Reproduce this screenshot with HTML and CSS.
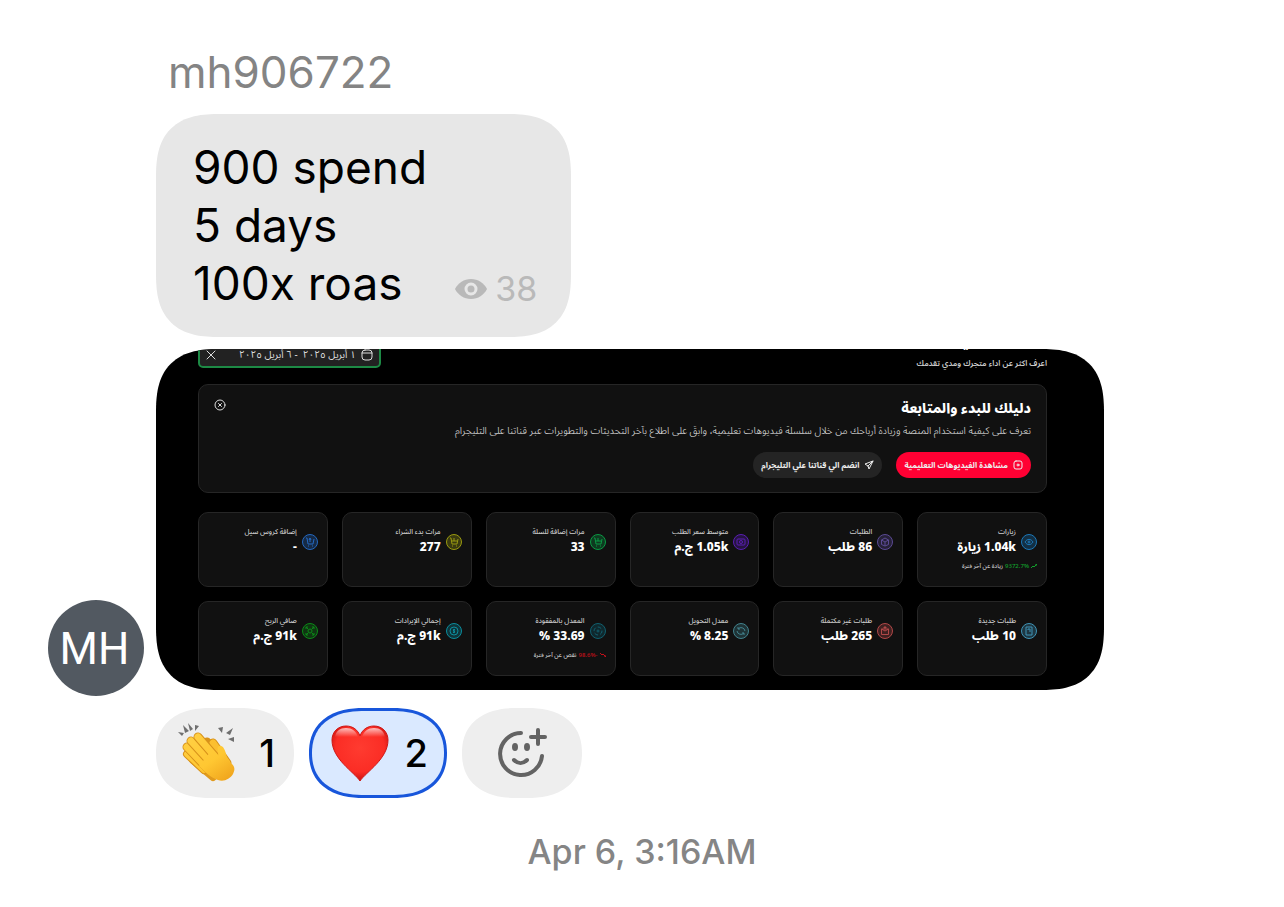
FILE: index.html
```
<!DOCTYPE html>
<html lang="en">

	<head>
		<meta charset="utf-8" />
		<title>mh906722</title>
		<link rel="stylesheet" href="styles.css">
	</head>

	<body>
		<main class="chat">
			<div class="name">mh906722</div>
			<div class="bubble">
				<p class="text">900 spend<br>5 days<br>100x roas</p>
				<div class="views">
					<svg width="32" height="22" viewBox="0 0 32 22"><path d="M16 1C9 1 3 5 0 11c3 6 9 10 16 10s13-4 16-10C29 5 23 1 16 1z" fill="#b9b9b9"/><circle cx="16" cy="11" r="5" fill="none" stroke="#e7e7e7" stroke-width="3"/></svg>
					<span>38</span>
				</div>
			</div>

			<div class="row">
				<div class="avatar">MH</div>
				<section class="media" dir="rtl" lang="ar">
					<header class="top">
						<div class="heading">
							<h1>نظرة عامة علي</h1>
							<p>اعرف اكثر عن اداء متجرك ومدي تقدمك</p>
						</div>
						<div class="date">
							<svg width="12" height="12" viewBox="0 0 12 12" class="line"><rect x="1" y="1" width="10" height="10" rx="3"/><path d="M1 4h10"/></svg>
							<span>١ أبريل ٢٠٢٥ &nbsp;- ٦ أبريل ٢٠٢٥</span>
							<button class="clear" aria-label="مسح"><svg width="10" height="10" viewBox="0 0 10 10" class="line"><path d="M1 1l8 8M9 1l-8 8"/></svg></button>
						</div>
					</header>

					<div class="guide">
						<div class="guide_text">
							<h2>دليلك للبدء والمتابعة</h2>
							<p>تعرف على كيفية استخدام المنصة وزيادة أرباحك من خلال سلسلة فيديوهات تعليمية، وابقَ على اطلاع بآخر التحديثات والتطويرات عبر قناتنا على التليجرام</p>
							<div class="actions">
								<button class="btn red"><svg width="10" height="10" viewBox="0 0 10 10" class="line"><rect x="1" y="1" width="8" height="8" rx="2"/><circle cx="5" cy="5" r="1"/></svg>مشاهدة الفيديوهات التعليمية</button>
								<button class="btn"><svg width="10" height="10" viewBox="0 0 10 10" class="line"><path d="M9 1L1 4l3 2 1 3 4-8L4 6"/></svg>انضم الي قناتنا علي التليجرام</button>
							</div>
						</div>
						<button class="close" aria-label="إغلاق"><svg width="12" height="12" viewBox="0 0 12 12" class="line"><circle cx="6" cy="6" r="5"/><path d="M4.500 4.500l3 3M7.500 4.500l-3 3"/></svg></button>
					</div>

					<div class="cards">
						<div class="card">
							<svg class="icon blue" viewBox="0 0 16 16"><circle cx="8" cy="8" r="7.500"/><path d="M4 8c2-3.500 6-3.500 8 0-2 3.500-6 3.500-8 0z"/><circle cx="8" cy="8" r="1"/></svg>
							<div><h3>زيارات</h3><strong>1.04k زيارة</strong></div>
							<p class="trend"><svg width="6" height="4" viewBox="0 0 6 4"><path d="M0 4l2-2 1 1 3-3M4 0h2v2" fill="none" stroke="#12a02c"/></svg><span class="up">9372.7%</span> زيادة عن آخر فترة</p>
						</div>
						<div class="card">
							<svg class="icon violet" viewBox="0 0 16 16"><circle cx="8" cy="8" r="7.500"/><path d="M4.500 6L8 4l3.500 2v4.500L8 12l-3.500-1.500zM4.500 6L8 8l3.500-2M8 8v4"/></svg>
							<div><h3>الطلبات</h3><strong>86 طلب</strong></div>
						</div>
						<div class="card">
							<svg class="icon purple" viewBox="0 0 16 16"><circle cx="8" cy="8" r="7.500"/><rect x="4" y="5" width="8" height="6" rx="1"/><circle cx="8" cy="8" r="1.500"/></svg>
							<div><h3>متوسط سعر الطلب</h3><strong>1.05k ج.م</strong></div>
						</div>
						<div class="card">
							<svg class="icon green" viewBox="0 0 16 16"><circle cx="8" cy="8" r="7.500"/><path d="M4 4h1l1 6h5l1-5M6 7h5M8 4v3M6 12h1M10 12h1"/></svg>
							<div><h3>مرات إضافة للسلة</h3><strong>33</strong></div>
						</div>
						<div class="card">
							<svg class="icon yellow" viewBox="0 0 16 16"><circle cx="8" cy="8" r="7.500"/><path d="M4 4h1l1 6h5l1-5M6 7h5M8 4v3M6 12h1M10 12h1"/></svg>
							<div><h3>مرات بدء الشراء</h3><strong>277</strong></div>
						</div>
						<div class="card">
							<svg class="icon azure" viewBox="0 0 16 16"><circle cx="8" cy="8" r="7.500"/><path d="M4 4h1l1 6h5l1-5M7 6l1-2 1 2M8 4v4M6 12h1M10 12h1"/></svg>
							<div><h3>إضافة كروس سيل</h3><strong>-</strong></div>
						</div>
						<div class="card">
							<svg class="icon sky" viewBox="0 0 16 16"><circle cx="8" cy="8" r="7.500"/><path d="M5 4h6v8H5zM7 6h2v3M7 6v1"/></svg>
							<div><h3>طلبات جديدة</h3><strong>10 طلب</strong></div>
						</div>
						<div class="card">
							<svg class="icon coral" viewBox="0 0 16 16"><circle cx="8" cy="8" r="7.500"/><path d="M4.500 6h7v5.500h-7zM4.500 6L8 8l3.500-2M8 3v3M6.500 4.500h3"/></svg>
							<div><h3>طلبات غير مكتملة</h3><strong>265 طلب</strong></div>
						</div>
						<div class="card">
							<svg class="icon mist" viewBox="0 0 16 16"><circle cx="8" cy="8" r="7.500"/><path d="M5 6a4 4 0 0 1 7 2M11 10a4 4 0 0 1-7-2M5 4v2h2M11 12v-2H9"/></svg>
							<div><h3>معدل التحويل</h3><strong>8.25 %</strong></div>
						</div>
						<div class="card">
							<svg class="icon teal" viewBox="0 0 16 16"><circle cx="8" cy="8" r="7.500"/><circle cx="8" cy="8" r="4" stroke-dasharray="4 2"/><circle cx="8" cy="8" r="1"/></svg>
							<div><h3>المعدل بالمفقودة</h3><strong>33.69 %</strong></div>
							<p class="trend"><svg width="6" height="4" viewBox="0 0 6 4"><path d="M0 0l2 2 1-1 3 3M4 4h2V2" fill="none" stroke="#c4101a"/></svg><span class="down" dir="ltr">98.6%-</span> نقص عن آخر فترة</p>
						</div>
						<div class="card">
							<svg class="icon cyan" viewBox="0 0 16 16"><circle cx="8" cy="8" r="7.500"/><circle cx="8" cy="8" r="4"/><path d="M9 6.500H7.500v1.500h1v1.500H7M8 6v4"/></svg>
							<div><h3>إجمالي الإيرادات</h3><strong>91k ج.م</strong></div>
						</div>
						<div class="card">
							<svg class="icon lime" viewBox="0 0 16 16"><circle cx="8" cy="8" r="7.500"/><path d="M4 4l2 2M12 4l-2 2M4 12l2-2M12 12l-2-2M4 6V4h2M10 4h2v2M4 10v2h2M10 12h2v-2"/><circle cx="8" cy="8" r="2"/></svg>
							<div><h3>صافي الربح</h3><strong>91k ج.م</strong></div>
						</div>
					</div>
				</section>
			</div>

			<div class="reactions">
				<button class="reaction" aria-label="clap 1">
					<svg width="60" height="62" viewBox="0 0 60 62">
						<defs><linearGradient id="skin" gradientUnits="userSpaceOnUse" x1="12" y1="10" x2="48" y2="60"><stop offset="0" stop-color="#ffd045"/><stop offset="0.600" stop-color="#ffc732"/><stop offset="1" stop-color="#f0a51d"/></linearGradient></defs>
						<path d="M6 3l6 6-4 2zM11 1l5 6-3 2zM1 10l6 1-2 3zM18 3l4 1-4 5zM41 6l5-1-1 6zM56 6l-3 7-4-2zM51 17l6-2v5z" fill="#6f6f6f"/>
						<g stroke-linecap="round" stroke-linejoin="round" fill="none">
							<path d="M30 20l16 20M36 21l14 20" stroke="#d8921a" stroke-width="9"/>
							<path d="M36 21l14 20" stroke="#fbbf30" stroke-width="7"/>
							<path d="M16 38l20 17" stroke="#e09a1d" stroke-width="8"/>
							<path d="M10 32l17 16" stroke="#d8921a" stroke-width="8"/><path d="M10 32l17 16" stroke="url(#skin)" stroke-width="6"/>
							<path d="M10 25l20 21" stroke="#d8921a" stroke-width="9"/><path d="M10 25l20 21" stroke="url(#skin)" stroke-width="7"/>
							<path d="M14 19l22 24" stroke="#d8921a" stroke-width="9"/><path d="M14 19l22 24" stroke="url(#skin)" stroke-width="7"/>
							<path d="M21 15l20 23" stroke="#d8921a" stroke-width="9"/><path d="M21 15l20 23" stroke="url(#skin)" stroke-width="7"/>
						</g>
						<path d="M34 29l7 6c1-4-2-9 1-11 4-1 6 4 7 8 1 5 3 8 6 10 3 3 3 6 1 10-3 5-9 8-15 6-7-2-13-8-19-14z" fill="url(#skin)"/>
					</svg>
					<span>1</span>
				</button>
				<button class="reaction mine" aria-label="heart 2">
					<svg width="58" height="58" viewBox="0 0 58 58">
						<defs>
							<radialGradient id="heart" cx="0.500" cy="0.400" r="0.620"><stop offset="0" stop-color="#ff3b30"/><stop offset="0.700" stop-color="#fb2d25"/><stop offset="1" stop-color="#c30d0c"/></radialGradient>
							<linearGradient id="shine" x1="0" y1="0" x2="0" y2="1"><stop offset="0" stop-color="#fff" stop-opacity="0.700"/><stop offset="1" stop-color="#fff" stop-opacity="0"/></linearGradient>
						</defs>
						<path d="M29 57C23 48 1 35 1 16 1 8 7 2 15 2c7 0 12 4 14 10C31 6 36 2 43 2c8 0 14 6 14 14 0 19-22 32-28 41z" fill="url(#heart)" stroke="#cf1714"/>
						<path d="M4 13c1-6 5-9 11-9s10 3 12 9zM31 13c2-6 6-9 12-9s10 3 11 9z" fill="url(#shine)"/>
					</svg>
					<span>2</span>
				</button>
				<button class="reaction add" aria-label="Add reaction">
					<svg width="50" height="50" viewBox="0 0 50 50" fill="none" stroke="#636363" stroke-width="4" stroke-linecap="round"><path d="M24 5a21 21 0 1 0 21 23M41 2v14M34 9h14M17 32c4 4 9 4 13 0"/><ellipse cx="18" cy="19" rx="3" ry="4" fill="#636363" stroke="none"/><ellipse cx="30" cy="19" rx="3" ry="4" fill="#636363" stroke="none"/></svg>
				</button>
			</div>

			<time class="time">Apr 6, 3:16AM</time>
		</main>
	</body>

</html>
```
FILE: styles.css
```
* {
	margin: 0;
	padding: 0;
	box-sizing: border-box;
}

body {
	background: #fff;
	color: #000;
	font-family: Inter, "Liberation Sans", sans-serif;
}

button {
	border: none;
	background: none;
	color: inherit;
	font-family: inherit;
	cursor: pointer;
}

svg {
	flex: none;
	display: block;
}

.chat {
	display: flex;
	flex-direction: column;
	align-items: flex-start;
	padding: 43px 180px 32px 48px;
}

.name {
	margin: 0 0 13px 120px;
	font-size: 44px;
	line-height: 58px;
	color: #848484;
}

.bubble {
	display: flex;
	align-items: flex-end;
	gap: 28px;
	margin-left: 108px;
	padding: 24px 34px 25px 37px;
	border-radius: 56px;
	background: #e7e7e7;
}

.text {
	font-size: 46px;
	line-height: 58px;
}

.views {
	display: flex;
	align-items: center;
	gap: 8px;
	font-size: 34px;
	line-height: 46px;
	color: #b9b9b9;
}

.row {
	display: flex;
	align-items: flex-end;
	align-self: stretch;
	gap: 12px;
	margin-top: 12px;
}

.avatar {
	flex: none;
	width: 96px;
	height: 96px;
	margin-bottom: -6px;
	padding-right: 3px;
	border-radius: 50%;
	background: #525961;
	color: #fff;
	font-family: Roboto, sans-serif;
	font-size: 44px;
	line-height: 98px;
	text-align: center;
}

/* shared dashboard */
.media {
	flex: 1;
	min-width: 0;
	padding: 0 57px 14px 42px;
	overflow: hidden;
	border-radius: 56px;
	background: #000;
	color: #fff;
	font-family: "Noto Sans Arabic", "Noto Sans", "DejaVu Sans", sans-serif;
}

.line {
	fill: none;
	stroke: currentColor;
	stroke-linecap: round;
	stroke-linejoin: round;
}

.top {
	display: flex;
	justify-content: space-between;
	align-items: flex-start;
	height: 35px;
}

.heading {
	margin-top: -20px;
}

.heading h1 {
	margin-bottom: 5px;
	font-size: 14px;
	line-height: 22px;
}

.heading p {
	font-size: 8px;
	font-weight: 600;
	line-height: 16px;
	color: #ccc;
}

.date {
	display: flex;
	align-items: center;
	gap: 5px;
	height: 27px;
	margin-top: -8px;
	padding: 0 6px;
	border: 2px solid #1d8a45;
	border-radius: 5px;
	background: #222;
	color: #ddd;
	font-size: 10px;
	white-space: nowrap;
}

.date span {
	margin-left: 18px;
}

.guide {
	display: flex;
	justify-content: space-between;
	align-items: flex-start;
	padding: 14px 15px;
	border: 1px solid #262626;
	border-radius: 10px;
	background: #111;
}

.guide h2 {
	font-size: 14px;
	font-weight: 800;
	line-height: 20px;
}

.guide p {
	font-size: 10px;
	font-weight: 300;
	line-height: 24px;
	color: #eee;
}

.close {
	color: #ddd;
}

.actions {
	display: flex;
	gap: 14px;
	margin-top: 9px;
}

.btn {
	display: flex;
	align-items: center;
	gap: 5px;
	height: 26px;
	padding: 0 8px;
	border-radius: 13px;
	background: #242424;
	color: #eee;
	font-size: 8px;
	font-weight: bold;
}

.red {
	background: #ff0033;
}

.cards {
	display: grid;
	grid-template-columns: repeat(6, 1fr);
	gap: 14px;
	margin-top: 19px;
}

.card {
	display: grid;
	grid-template-columns: 16px 1fr;
	align-content: start;
	column-gap: 5px;
	height: 75px;
	padding: 13px 9px;
	border: 1px solid #262626;
	border-radius: 10px;
	background: #111;
}

.card h3 {
	font-size: 7px;
	font-weight: 500;
	line-height: 12px;
	color: #ccc;
}

.card strong {
	display: block;
	font-size: 12px;
	font-weight: 800;
	line-height: 20px;
}

.trend {
	display: flex;
	align-items: center;
	gap: 2px;
	grid-column: 1 / 3;
	margin-top: 2px;
	font-size: 6px;
	font-weight: 500;
	line-height: 12px;
	color: #ccc;
}

.up {
	color: #12a02c;
}

.down {
	color: #c4101a;
}

.icon {
	width: 16px;
	height: 16px;
	margin-top: 8px;
	fill: none;
	stroke: currentColor;
}

.icon circle:first-child {
	fill: currentColor;
	fill-opacity: 0.3;
}

.blue { color: #1c78b8; }
.violet { color: #5b4a94; }
.purple { color: #5a1eb4; }
.green { color: #0b9a44; }
.yellow { color: #9a9a10; }
.azure { color: #2468c0; }
.sky { color: #3f93b5; }
.coral { color: #b04848; }
.mist { color: #42838e; }
.teal { color: #11606f; }
.cyan { color: #0c8c9c; }
.lime { color: #0c8a18; }

.reactions {
	display: flex;
	gap: 15px;
	margin: 18px 0 0 108px;
}

.reaction {
	display: flex;
	align-items: center;
	justify-content: space-between;
	width: 138px;
	height: 90px;
	padding: 0 19px 0 21px;
	border-radius: 45px;
	background: #eee;
	color: #000;
	font-size: 38px;
	font-weight: 500;
}

.mine {
	border: 3px solid #1856db;
	background: #dae9ff;
	padding: 0 16px 0 19px;
}

.add {
	width: 120px;
	justify-content: center;
	padding: 0;
}

.time {
	align-self: center;
	margin: 32px 0 0 132px;
	font-size: 34px;
	font-weight: 500;
	line-height: 44px;
	color: #858585;
}

/* smoother corners where the browser has them */
@supports (corner-shape: squircle) {
	.bubble,
	.media {
		border-radius: 64px;
		corner-shape: superellipse(1.4);
	}

	.reaction {
		border-radius: 54px / 45px;
		corner-shape: superellipse(1.2);
	}
}
```
